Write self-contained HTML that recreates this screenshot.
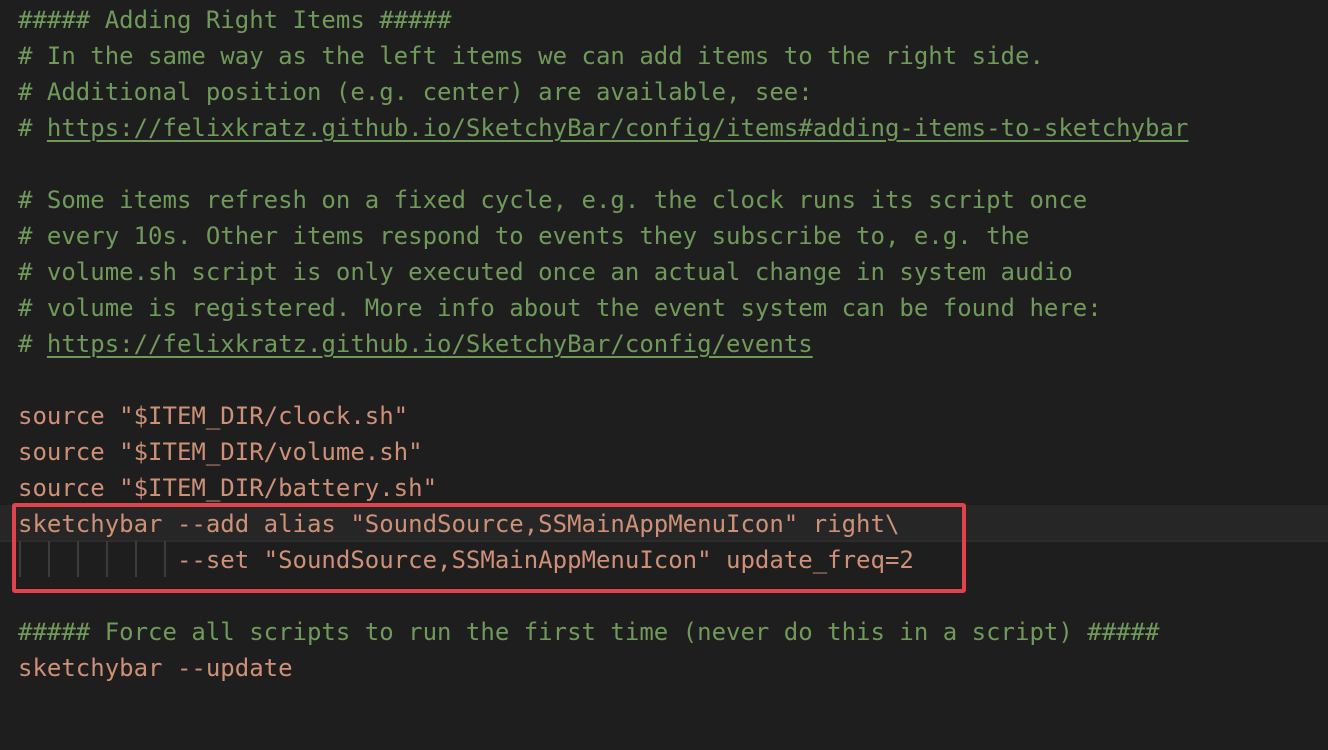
<!DOCTYPE html>
<html><head><meta charset="utf-8"><style>
html,body{margin:0;padding:0;background:#1e1e1e;width:1328px;height:750px;overflow:hidden}
.ed{position:absolute;left:18px;top:2px;font-family:"DejaVu Sans Mono","Liberation Mono",monospace;font-size:24px;line-height:36px;white-space:pre;color:#ce9178}
.c{color:#6f9a5a}
.u{text-decoration:underline;text-underline-offset:4px;text-decoration-thickness:2px}
.cur{position:absolute;left:0;top:505px;width:1328px;height:35px;background:#262626;border-bottom:2px solid #2c2c2c}
.box{position:absolute;left:12px;top:503px;width:946px;height:82px;border:4px solid #e0434b;border-radius:3px}
.g{position:absolute;top:541px;height:36px;width:2px;background:#3c3c3c}
</style></head><body>
<div class="cur"></div>
<div class="g" style="left:19px"></div><div class="g" style="left:48px"></div><div class="g" style="left:77px"></div><div class="g" style="left:106px"></div><div class="g" style="left:135px"></div><div class="g" style="left:164px"></div>
<div class="ed"><span class="c">##### Adding Right Items #####
# In the same way as the left items we can add items to the right side.
# Additional position (e.g. center) are available, see:
# <span class="u">https://felixkratz.github.io/SketchyBar/config/items#adding-items-to-sketchybar</span>

# Some items refresh on a fixed cycle, e.g. the clock runs its script once
# every 10s. Other items respond to events they subscribe to, e.g. the
# volume.sh script is only executed once an actual change in system audio
# volume is registered. More info about the event system can be found here:
# <span class="u">https://felixkratz.github.io/SketchyBar/config/events</span></span>

source "$ITEM_DIR/clock.sh"
source "$ITEM_DIR/volume.sh"
source "$ITEM_DIR/battery.sh"
sketchybar --add alias "SoundSource,SSMainAppMenuIcon" right\
           --set "SoundSource,SSMainAppMenuIcon" update_freq=2

<span class="c">##### Force all scripts to run the first time (never do this in a script) #####</span>
sketchybar --update</div>
<div class="box"></div>
</body></html>
